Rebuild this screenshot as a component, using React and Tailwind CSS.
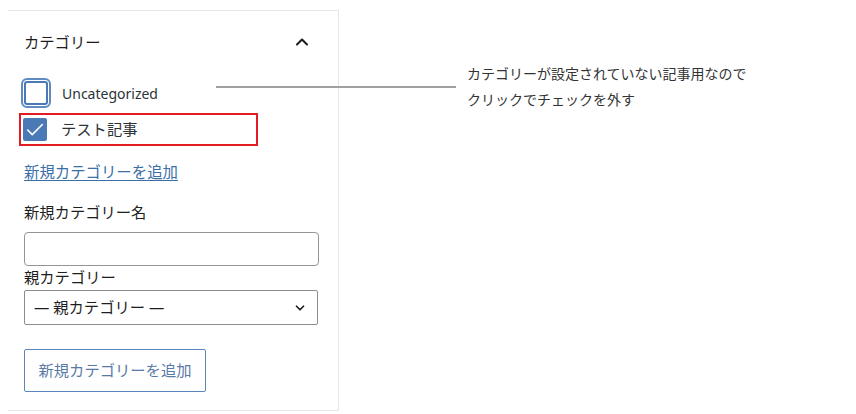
import { ChevronUp, ChevronDown, Check } from "lucide-react";

const font = { fontFamily: '"Noto Sans", "Noto Sans CJK JP", sans-serif' };

function CategoryRow({ label, checked, focused }) {
  return (
    <div className="flex items-center gap-[14px] h-[34px]">
      <span
        className={
          checked
            ? "flex items-center justify-center w-6 h-[23px] rounded-[2px] bg-[#4a7ab5]"
            : "w-6 h-6 rounded-[3px] border-2 border-[#4a7ab5] bg-white"
        }
        style={focused ? { outline: "2px solid #5f8bc2", outlineOffset: "1px" } : undefined}
      >
        {checked && <Check size={22} strokeWidth={1.75} className="text-white" />}
      </span>
      <span className={checked ? "text-[15.3px] text-[#2c3338]" : "text-[14px] text-[#2c3338]"}>
        {label}
      </span>
    </div>
  );
}

export default function App() {
  return (
    <div className="relative w-[856px] h-[414px] bg-white overflow-hidden" style={font}>
      {/* Panel */}
      <div className="ml-2 mt-[10px] w-[331px] h-[401px] border-t border-r border-b border-[#e6e6e6] px-4">
        {/* Header */}
        <div className="flex items-center justify-between h-[64px]">
          <h2 className="text-[15.3px] text-[#1e1e1e] font-normal pb-[2px]">カテゴリー</h2>
          <ChevronUp size={20} strokeWidth={2.5} className="text-[#1e1e1e] mr-[10px] mb-[2px]" />
        </div>

        {/* Category list */}
        <div className="mt-[1px]">
          <CategoryRow label="Uncategorized" focused />
          <div className="-ml-[5px] mt-[3px] w-[239px] h-[33px] border-2 border-[#e31b23] pl-[2px] flex items-center">
            <CategoryRow label="テスト記事" checked />
          </div>
        </div>

        {/* Add new */}
        <a href="#" className="block mt-[17px] text-[15.4px] leading-[20px] text-[#3b6fa8] underline underline-offset-2">
          新規カテゴリーを追加
        </a>
        <label className="block mt-[19px] text-[15.3px] leading-[20px] text-[#1e1e1e]">新規カテゴリー名</label>
        <div className="mt-[10px] w-[295px] h-[34px] rounded-[4px] border border-[#949494] bg-white" />
        <label className="block mt-[1px] text-[15.3px] leading-[20px] text-[#1e1e1e]">親カテゴリー</label>
        <div className="mt-[3px] w-[294px] h-[35px] rounded-[2px] border border-[#8c8c8c] flex items-center justify-between pl-[9px] pr-[10px]">
          <span className="text-[15.3px] text-[#1e1e1e]">— 親カテゴリー —</span>
          <ChevronDown size={14} strokeWidth={3} className="text-[#1e1e1e]" />
        </div>
        <button
          type="button"
          className="mt-[24px] w-[182px] h-[43px] rounded-[2px] border border-[#5b86bd] text-[15.3px] text-[#5a7aa6] bg-white"
        >
          新規カテゴリーを追加
        </button>
      </div>

      {/* Annotation */}
      <div className="absolute left-[216px] top-[86px] w-[240px] h-[2px] bg-[#a0a0a0]" />
      <div className="absolute left-[467px] top-[61px] text-[14px] leading-[26px] text-[#333]">
        <p>カテゴリーが設定されていない記事用なので</p>
        <p>クリックでチェックを外す</p>
      </div>
    </div>
  );
}
